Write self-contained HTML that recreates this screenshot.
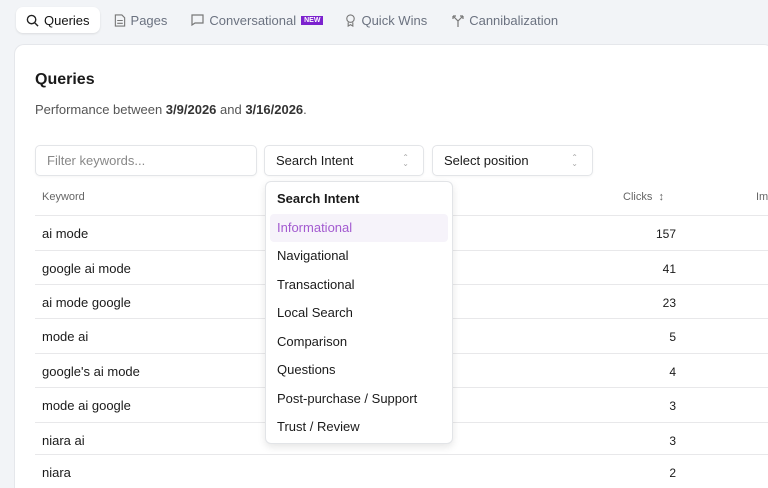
<!DOCTYPE html><html><head><style>
*{box-sizing:border-box;margin:0;padding:0}
html,body{width:768px;height:488px;overflow:hidden}
body{background:#f2f4f7;font-family:"Liberation Sans",sans-serif;position:relative;color:#1a1a1a}
.tabs{position:absolute;left:16px;top:7px;height:26px;display:flex;align-items:center;font-size:13px;color:#6b7280}
.tab{display:flex;align-items:center;gap:5px;padding:0 10px;height:26px;margin-right:4px}
.tab.act{background:#fff;border-radius:7px;color:#111;box-shadow:0 1px 2px rgba(0,0,0,.1)}
.new{background:#7c22ce;color:#fff;font-size:7px;font-weight:bold;padding:1px 3px}
.card{position:absolute;left:14px;top:44px;width:760px;height:444px;background:#fff;border:1px solid #e5e7eb;border-bottom:none;border-radius:10px 10px 0 0}
h1{position:absolute;left:35px;top:71px;font-size:16px;font-weight:bold}
.perf{position:absolute;left:35px;top:102px;font-size:13px;color:#555}
.perf b{color:#333}
.inp{position:absolute;top:145px;height:31px;border:1px solid #e3e5e8;border-radius:5px;font-size:13px;padding:7px 11px;background:#fff;box-shadow:0 1px 2px rgba(0,0,0,.04)}
.arr{position:absolute;right:14px;top:9px;font-size:8px;color:#aaa;line-height:6px}
.hdr{position:absolute;top:191px;font-size:11px;color:#666}
.row{position:absolute;left:35px;width:733px;height:34px;border-top:1px solid #e8e8ea;font-size:13px;padding:10px 7px}
.row span{position:absolute;right:92px;top:11px;font-size:12px}
.dd{position:absolute;left:265px;top:181px;width:188px;height:263px;background:#fff;border:1px solid #e2e4e7;border-radius:6px;box-shadow:0 3px 8px rgba(0,0,0,.1);font-size:13px;padding:3px 4px}
.dd div{height:28.5px;padding:6px 7px}
</style></head><body>
<div class="tabs">
<div class="tab act"><svg width="13" height="13" viewBox="0 0 14 14" fill="none" stroke="#222" stroke-width="1.5"><circle cx="6" cy="6" r="4.5"/><path d="M9.5 9.5L13 13"/></svg>Queries</div>
<div class="tab"><svg width="12" height="13" viewBox="0 0 12 14" fill="none" stroke="#777" stroke-width="1.2"><path d="M1 1h7l3 3v9H1z M3 7h6M3 10h6"/></svg>Pages</div>
<div class="tab" style="margin-right:2px"><svg width="13" height="12" viewBox="0 0 13 12" fill="none" stroke="#777" stroke-width="1.2"><path d="M1 1h11v8H4l-3 2z"/></svg>Conversational <span class="new">NEW</span></div>
<div class="tab"><svg width="11" height="13" viewBox="0 0 11 14" fill="none" stroke="#777" stroke-width="1.2"><circle cx="5.5" cy="5" r="4"/><path d="M3 9v4l2.5-1.5L8 13V9"/></svg>Quick Wins</div>
<div class="tab" style="margin-left:1px"><svg width="12" height="13" viewBox="0 0 12 13" fill="none" stroke="#777" stroke-width="1.2"><path d="M6 13V7L1 2M6 7l5-5M1 2h3M1 2v3M11 2H8M11 2v3"/></svg>Cannibalization</div>
</div>
<div class="card"></div>
<h1>Queries</h1>
<div class="perf">Performance between <b>3/9/2026</b> and <b>3/16/2026</b>.</div>
<div class="inp" style="left:35px;width:222px;color:#888">Filter keywords...</div>
<div class="inp" style="left:264px;width:160px">Search Intent<div class="arr">⌃<br>⌄</div></div>
<div class="inp" style="left:432px;width:161px">Select position<div class="arr">⌃<br>⌄</div></div>
<div class="hdr" style="left:42px">Keyword</div>
<div class="hdr" style="left:623px">Clicks &nbsp;↕</div>
<div class="hdr" style="left:756px">Im</div>
<div class="row" style="top:215px">ai mode<span>157</span></div>
<div class="row" style="top:250px">google ai mode<span>41</span></div>
<div class="row" style="top:284px">ai mode google<span>23</span></div>
<div class="row" style="top:318px">mode ai<span>5</span></div>
<div class="row" style="top:353px">google's ai mode<span>4</span></div>
<div class="row" style="top:387px">mode ai google<span>3</span></div>
<div class="row" style="top:422px">niara ai<span>3</span></div>
<div class="row" style="top:454px">niara<span>2</span></div>
<div class="dd">
<div style="font-weight:bold">Search Intent</div>
<div style="background:#f6f3fa;color:#a35ad0;border-radius:4px">Informational</div>
<div>Navigational</div><div>Transactional</div><div>Local Search</div><div>Comparison</div><div>Questions</div><div>Post-purchase / Support</div><div>Trust / Review</div>
</div>
</body></html>
